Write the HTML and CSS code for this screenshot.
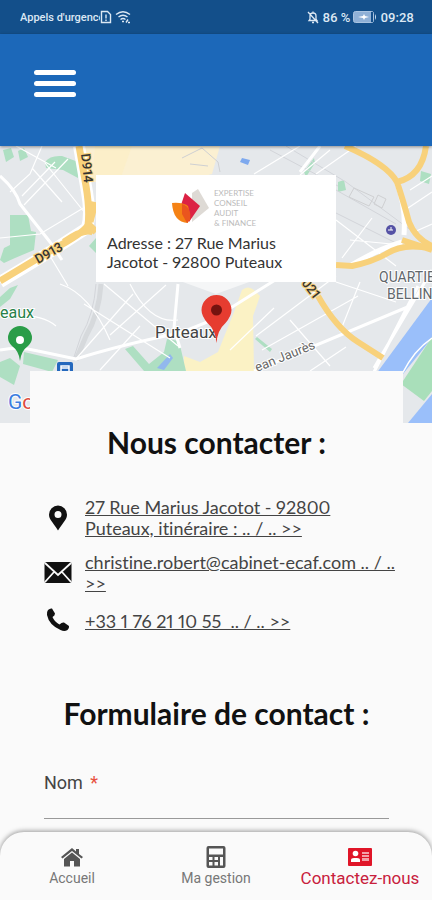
FILE: index.html
```html
<!DOCTYPE html>
<html lang="fr">
<head>
    <meta charset="UTF-8">
    <meta name="viewport" content="width=device-width, initial-scale=1.0">
    <title>Contactez-nous</title>
    <link rel="stylesheet" href="styles.css">
</head>
<body>
    <div class="statusBar">
        <span class="operator">Appels d'urgence</span>
        <svg class="simIcon" viewBox="0 0 12 14" width="12" height="14" fill="none" stroke="currentColor" stroke-width="1.4">
            <path d="M1.5 1.5h6l3 3v8h-9z"/>
            <path d="M6 4.5v4M6 9.5v1.5"/>
        </svg>
        <svg class="wifiIcon" viewBox="0 0 16 14" width="16" height="14" fill="none" stroke="currentColor" stroke-width="1.4">
            <path d="M1 4.500q7-5.500 14 0M3.500 7q4.500-3.500 9 0M5.500 9.500q2.500-2 5 0"/>
            <path d="M7 11.500h2M11 12.500l2-3M13 12.500h2"/>
        </svg>
        <div class="statusRight">
            <svg viewBox="0 0 12 14" width="12" height="14" fill="none" stroke="currentColor" stroke-width="1.3">
                <path d="M2 10.500h8L9 9V6q0-3-3-3T3 6v3zM6 1.500V3M5 12.500h2M1 2l10 11"/>
            </svg>
            <span>86 %</span>
            <svg viewBox="0 0 24 12" width="24" height="12">
                <rect x="0.500" y="0.500" width="20" height="11" rx="2" fill="#8fb0d6" stroke="#a9c3e0"/>
                <path d="M18 1h2v10h-2z" fill="#14508c"/>
                <path d="M22 3q2 3 0 6z" fill="#cfe0f0"/>
                <path d="M5 6l5-1 1-2 1 2 4 1-4 1-1 2-1-2z" fill="#fff"/>
            </svg>
            <span>09:28</span>
        </div>
    </div>

    <header class="header">
        <button class="menuButton" type="button" aria-label="Menu">
            <span></span>
            <span></span>
            <span></span>
        </button>
    </header>

    <main>
        <section class="map">
            <svg class="mapDrawing" viewBox="0 146 432 277" preserveAspectRatio="xMidYMid slice">
                <rect y="146" width="432" height="277" fill="#e5e8eb"/>
                <!-- quartiers -->
                <path d="M84 146h136l-8 28-30 8H92z" fill="#fbf0d2"/>
                <path d="M218 352l16-40 8-22q6-5 12 0l6 6-7 20 1 56h-70v-16l16 6z" fill="#fbf2c5"/>
                <path d="M95 146h37l-12 34H92z" fill="#fcefc9"/>
                <!-- parcs -->
                <path d="M3 150l8-2 3 9-8 5zM18 151l6-3 4 9-8 4zM45 162q5-7 17-6l19 7-3 15-15-8-17-2zM10 215h18l3 16 5 1-2 18-19 8-11 5-4-3 4-12 6-3zM96 238l-7 8 7 7zM304 172l10-14 1 5-9 14zM338 182l6-2 2 10-8 2zM421 171l10 3-2 10-9-3z" fill="#aedfc2"/>
                <path d="M0 297l10-9 8-3-8 14-10 8zM0 362l10-4 10 8-6 19-14-8zM24 352l34 8-6 12-29-8zM125 349l8-3 16 18 15-12 3-13 12 2 7 30h-42zM255 339l2-2 15 12-2 3z" fill="#aedfc2"/>
                <path d="M157 368l13-14 3 4-9 12z" fill="#92b8ed"/>
                <path d="M242 158l8 2-2 5-8-3z" fill="#7ea9ee"/>
                <!-- voie ferrée -->
                <path d="M101 284q-2 30-15 52l-10 24" fill="none" stroke="#d6d9dc" stroke-width="5"/>
                <path d="M96 284q-2 30-15 52l-8 24M286 146l60 36 86 64M336 190l60 34M330 210l68 34M270 150l68 36" fill="none" stroke="#d3d5da" stroke-width="1"/>
                <path d="M354 188l20 9-5 9-20-9zM378 195l8 4-4 9-8-4zM182 158l20-10 16 14 2 10M190 164l18 2" fill="none" stroke="#cfd0d2"/>
                <!-- rues -->
                <g fill="none" stroke="#fff" stroke-width="1.200">
                    <path d="M42 146l-12 28-20 18M22 196l33-34M24 205l44-46M45 163l40 50M0 238l40-4 50-30M32 168l30 34M50 256l18 30M16 146l40 22M60 284q30 10 50 56M104 284l74 62M110 335l56-50M84 304l86 54M130 284q20 40 48 36M0 316q40-4 56 10M256 336l80-60M262 350l96-54M230 350l44-42M336 282l60 20M360 282l-20 50M336 220l60 46M350 240l52 5M372 218l-30 40M300 146l-46 28M330 150l-30 25M356 146l-40 28M410 190l22-14M405 210l27-18M414 232l18-8M75 360l58-66M100 370l40-44M310 371l36-24M290 320l40 46"/>
                </g>
                <g fill="none" stroke="#fff" stroke-width="3">
                    <path d="M0 176q16 14 20 28l30 38 12 18M0 350q20-4 38 1l38 8q44-14 104-26l30-12 70-44M178 284l-4 44 6 20M320 146l-20 26M254 371l156-65M418 286l-44 86M432 270l-58 98"/>
                    <path d="M397 183q9 24 7 52M350 266q26-16 52-24" stroke-width="5"/>
                </g>
                <!-- axes principaux -->
                <g fill="none" stroke="#fff" stroke-width="12">
                    <path d="M79 146l8 46q4 22 0 36L50 252 0 282"/>
                </g>
                <g fill="none" stroke="#f8d17b" stroke-width="7">
                    <path d="M79 146l7 40q4 24 2 39-4 8-38 26L0 281M88 224l8 8M90 222l5-20M64 242q20-14 29-10"/>
                    <path d="M345 146q42 18 52 36 6 18 12 40 6 16 23 24M426 146q-4 30-29 36M336 265l16 1q20-4 34-12 18-12 46-5M402 240l30 10M318 296q18 32 40 46l25 16" stroke-width="6"/>
                </g>
                <path d="M432 298l-56 76h27l29-36z" fill="#9abffa"/>
                <path d="M432 337l-31 47 23 17 8-10z" fill="#a9dfba"/>
                <path d="M432 394l-24 29h24z" fill="#9abffa"/>
                <path d="M402 374q12-24 30-36" fill="none" stroke="#fff" stroke-width="1.500"/>
                <!-- pointe de la fenêtre d'adresse -->
                <path d="M180 281h72l-36 13z" fill="#fff" opacity="0.600"/>
                <circle cx="391" cy="230" r="5" fill="#5552a5"/>
                <path d="M388 230h5M391 227v3" stroke="#fff"/>
                <rect x="57" y="362" width="16" height="14" rx="2" fill="#2468bd"/>
                <path d="M61 372v-6h8v6M61 368h8" fill="none" stroke="#fff" stroke-width="1.500"/>
                <g class="mapText">
                    <text transform="translate(81 154) rotate(84)" class="roadName">D914</text>
                    <text transform="translate(38 264) rotate(-29)" class="roadName">D913</text>
                    <text transform="translate(301 283) rotate(52)" class="roadName">021</text>
                    <text transform="translate(257 372) rotate(-22)" class="streetName">ean Jaurès</text>
                    <text x="379" y="282" class="areaName">QUARTIE</text>
                    <text x="387" y="299" class="areaName">BELLIN</text>
                    <text x="0" y="318" class="parkName">eaux</text>
                    <text x="155" y="338" class="cityName">Puteaux</text>
                    <text x="8" y="409" class="brandName">G<tspan class="brandRed">o</tspan></text>
                </g>
                <path d="M20 361q-1-10-8-15-4-4-4-8a12 12 0 0 1 24 0q0 4-4 8-7 5-8 15z" fill="#2a9d48"/>
                <circle cx="20" cy="340" r="4" fill="#fff"/>
                <path d="M216.500 343q-1-13-9-20-6-7-6-13a15 15 0 0 1 30 0q0 6-6 13-8 7-9 20z" fill="#e63c30"/>
                <circle cx="216.500" cy="310" r="5.500" fill="#75130f"/>
            </svg>
            <div class="addressCard">
                <svg class="logo" viewBox="0 0 90 42" width="90" height="42">
                    <path d="M21 6l6-4 11 19-17 14z" fill="#dedad5"/>
                    <path d="M14 6l15 13-11 16-8-17z" fill="#dc2244"/>
                    <path d="M1 16q10-1 16 3l1 4-1 13Q2 35 1 16z" fill="#f58215"/>
                    <path d="M11 17q10 3 8 16l-3 3-5-9z" fill="#ea551e"/>
                    <g class="logoText">
                        <text x="43" y="9">EXPERTISE</text>
                        <text x="43" y="19">CONSEIL</text>
                        <text x="43" y="29">AUDIT</text>
                        <text x="43" y="39">&amp; FINANCE</text>
                    </g>
                </svg>
                <p>Adresse : 27 Rue Marius Jacotot - 92800 Puteaux</p>
            </div>
        </section>

        <section class="content">
            <h2>Nous contacter :</h2>
            <ul class="contactList">
                <li>
                    <svg viewBox="0 0 28 28" width="28" height="28">
                        <path d="M14 1.500a9 9 0 0 0-9 9c0 5 3 6.500 9 16 6-9.500 9-11 9-16a9 9 0 0 0-9-9zm0 5.500a3.500 3.500 0 1 1 0 7 3.500 3.500 0 0 1 0-7z" fill-rule="evenodd"/>
                    </svg>
                    <a href="#">27 Rue Marius Jacotot - 92800 Puteaux, itinéraire : .. / .. &gt;&gt;</a>
                </li>
                <li>
                    <svg viewBox="0 0 28 28" width="28" height="28">
                        <rect x="0.500" y="3" width="27" height="21" rx="2"/>
                        <path d="M1 4l13 12L27 4M1 23l9-10M27 23l-9-10" fill="none" stroke="#fafafa" stroke-width="1.800"/>
                    </svg>
                    <a href="#">christine.robert@cabinet-ecaf.com .. / .. &gt;&gt;</a>
                </li>
                <li>
                    <svg viewBox="0 0 28 28" width="28" height="28">
                        <path d="M4 3q2-2 4-1.500l3 5q0 2-2.500 3.500 2 5 7 7.500Q18 15 20 15.500l5 3.500q.5 2-1.500 4-3 2-7 0Q5 18 3 8q-.5-3 1-5z"/>
                    </svg>
                    <a href="#">+33 1 76 21 10 55&nbsp; .. / .. &gt;&gt;</a>
                </li>
            </ul>

            <h2>Formulaire de contact :</h2>
            <form class="contactForm">
                <label for="nom">Nom <span class="required">*</span></label>
                <input type="text" id="nom" name="nom" required>
            </form>
        </section>
    </main>

    <nav class="bottomNav">
        <a href="#">
            <svg viewBox="0 0 24 22" width="24" height="22">
                <path d="M1 11L12 2l4 3.500V3h3v5l4 3-1.500 1.500L12 5l-9.500 7.500z"/>
                <path d="M4 13l8-6.500 8 6.500v7.500h-6V15h-4v5.500H4z"/>
            </svg>
            <span>Accueil</span>
        </a>
        <a href="#">
            <svg viewBox="0 0 24 22" width="24" height="22">
                <path d="M4.500 0h15q2 0 2 2v18q0 2-2 2h-15q-2 0-2-2V2q0-2 2-2zM5 2.500v6h14v-6zM5 11v3h3.500v-3zM10.500 11v3H14v-3zM5 16v3.500h3.500V16zM10.500 16v3.500H14V16zM16 11v8.500h3V11z" fill-rule="evenodd"/>
            </svg>
            <span>Ma gestion</span>
        </a>
        <a href="#" class="active">
            <svg viewBox="0 0 24 22" width="24" height="22">
                <rect x="0" y="2" width="24" height="18" rx="1"/>
                <g fill="#fff">
                    <circle cx="7.500" cy="7.500" r="2.800"/>
                    <path d="M3 16v-2q0-2 3-2h3q3 0 3 2v2z"/>
                    <path d="M14 6h7v9h-7z" opacity="0.600"/>
                    <path d="M14 8h7v1h-7zM14 11h7v1h-7z" fill="#e01528"/>
                </g>
            </svg>
            <span>Contactez-nous</span>
        </a>
    </nav>
</body>
</html>
```
FILE: styles.css
```css
* {
    box-sizing: border-box;
}
body {
    margin: 0;
    min-height: 100vh;
    display: flex;
    flex-direction: column;
    background-color: #fafafa;
    color: #222;
    font-family: Lato, "Liberation Sans", sans-serif;
    font-variant-numeric: proportional-nums;
    font-variant-ligatures: none;
}
main {
    flex: 1;
}
.statusBar {
    display: flex;
    align-items: center;
    height: 34px;
    padding: 0 18px 0 20px;
    background-color: #134f8a;
    color: #dce8f4;
    font-family: Roboto, sans-serif;
    font-size: 13px;
    font-weight: 500;
}
.operator {
    width: 80px;
    overflow: hidden;
    white-space: nowrap;
    font-size: 11px;
}
.wifiIcon {
    margin-left: 3px;
}
.statusRight {
    display: flex;
    align-items: center;
    gap: 3px;
    margin-left: auto;
}
.header {
    position: relative;
    z-index: 1;
    display: flex;
    align-items: center;
    height: 112px;
    padding: 0 34px 14px;
    background-color: #1c68b9;
    box-shadow: 0 1px 3px rgba(0, 0, 0, 0.4);
}
.menuButton {
    display: flex;
    flex-direction: column;
    gap: 6px;
    width: 42px;
    padding: 0;
    border: none;
    background: none;
    cursor: pointer;
}
.menuButton span {
    height: 5px;
    border-radius: 3px;
    background-color: #fff;
}
.map {
    position: relative;
    height: 277px;
    overflow: hidden;
}
.mapDrawing {
    display: block;
    width: 100%;
    height: 100%;
}
.mapText {
    font-family: Roboto, sans-serif;
    fill: #444;
    stroke: #fff;
    stroke-width: 2px;
    paint-order: stroke;
}
.roadName {
    font-size: 13px;
    font-weight: 500;
    stroke: #f8d17b;
    fill: #333;
}
.streetName {
    font-size: 13px;
    fill: #666;
}
.areaName {
    font-size: 14px;
    fill: #62676c;
}
.parkName {
    font-size: 16px;
    fill: #28814a;
}
.cityName {
    font-size: 17px;
}
.brandName {
    font-size: 21px;
    fill: #3b7de0;
}
.brandRed {
    fill: #dd4b3e;
}
.addressCard {
    position: absolute;
    top: 29px;
    left: 50%;
    width: 240px;
    padding: 12px 11px 11px;
    transform: translateX(-50%);
    background-color: #fff;
}
.addressCard p {
    margin: 4px 0 0;
    color: #333;
    font-size: 16px;
    line-height: 19px;
}
.logo {
    display: block;
    margin: 0 auto;
}
.logoText {
    font-size: 8px;
    fill: #bbb;
}
.content {
    position: relative;
    margin: -52px 29px 0 30px;
    padding: 52px 14px 12px;
    background-color: #fafafa;
}
h2 {
    margin: 0;
    font-size: 30px;
    line-height: 38px;
    text-align: center;
    color: #111;
}
.contactList {
    display: flex;
    flex-direction: column;
    gap: 13px;
    margin: 36px -10px 59px 0;
    padding: 0;
    list-style: none;
}
.contactList li {
    display: flex;
    align-items: center;
    gap: 13px;
}
.contactList svg {
    flex-shrink: 0;
    fill: #111;
}
.contactList a {
    color: #444;
    font-size: 18px;
    line-height: 21px;
}
.contactForm {
    display: flex;
    flex-direction: column;
    margin-top: 40px;
    font-family: Roboto, sans-serif;
}
.contactForm label {
    font-size: 18px;
    line-height: 22px;
    color: #444;
}
.required {
    margin-left: 3px;
    color: #e8503f;
}
.contactForm input {
    width: 100%;
    height: 25px;
    padding: 0;
    border: none;
    border-bottom: 1px solid #999;
    background: none;
    outline: none;
    font-size: 18px;
}
.bottomNav {
    position: sticky;
    bottom: 0;
    display: grid;
    grid-template-columns: repeat(3, 1fr);
    height: 68px;
    padding-top: 14px;
    border-radius: 24px 24px 0 0;
    background-color: #fafafa;
    box-shadow: 0 -1px 5px rgba(0, 0, 0, 0.4);
}
.bottomNav a {
    display: flex;
    flex-direction: column;
    align-items: center;
    color: #777;
    font-family: Roboto, sans-serif;
    font-size: 14px;
    line-height: 20px;
    text-decoration: none;
}
.bottomNav svg {
    fill: #555;
}
.bottomNav .active {
    color: #c8203c;
    font-size: 17px;
}
.bottomNav .active svg {
    fill: #e01528;
}
```
